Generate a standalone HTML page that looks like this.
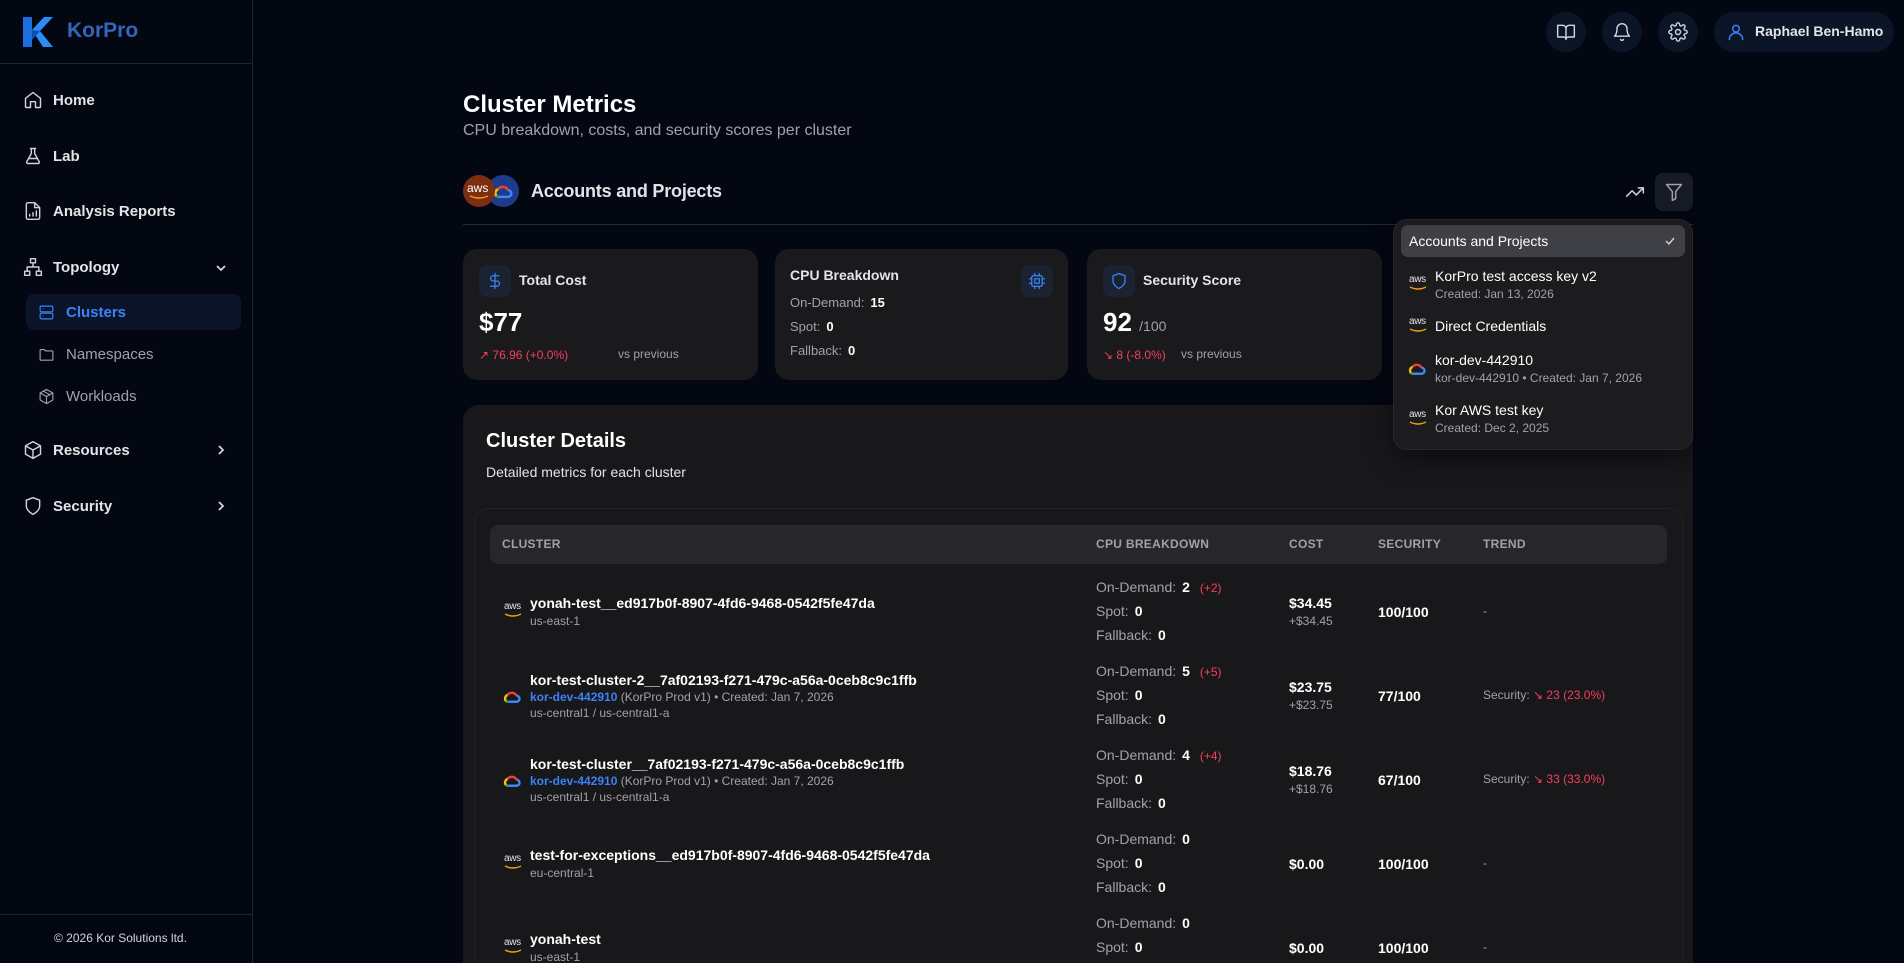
<!DOCTYPE html>
<html style="overflow:hidden;height:963px"><head><meta charset="utf-8">
<style>
*{box-sizing:border-box;margin:0;padding:0}
html,body{width:1904px;height:963px;overflow:hidden}
body{background:#030712;font-family:"Liberation Sans",sans-serif;color:#fff;position:relative}
.a{position:absolute;white-space:nowrap}
.side{position:absolute;left:0;top:0;width:253px;height:963px;border-right:1px solid #1f2433;background:#030712}
.nav{position:absolute;left:23px;font-size:15px;font-weight:600;color:#e4e4e7;display:flex;align-items:center;height:24px}
.nav svg{width:20px;height:20px;margin-right:10px;stroke:#d4d4d8;fill:none;stroke-width:1.7;stroke-linecap:round;stroke-linejoin:round}
.sub{position:absolute;left:38px;font-size:15px;color:#a1a1aa;display:flex;align-items:center;height:24px}
.sub svg{width:17px;height:17px;margin-right:11px;stroke:#a1a1aa;fill:none;stroke-width:1.6;stroke-linecap:round;stroke-linejoin:round}
.chev{position:absolute;left:214px;width:14px;height:14px;stroke:#d4d4d8;fill:none;stroke-width:1.8}
.card{position:absolute;top:249px;height:131px;background:#1a1a1d;border-radius:14px}
.ibox{position:absolute;width:32px;height:32px;border-radius:8px;background:#1b2333;display:flex;align-items:center;justify-content:center}
.ibox svg{width:18px;height:18px;stroke:#3b82f6;fill:none;stroke-width:1.7;stroke-linecap:round;stroke-linejoin:round}
.muted{color:#a1a1aa}
.red{color:#f43f5e}
.th{position:absolute;top:537px;font-size:12px;font-weight:700;color:#a1a1aa;letter-spacing:.3px}
.nm{font-size:14px;font-weight:600;color:#fff}
.sm{font-size:12px;color:#a1a1aa}
.cpu{font-size:14px;color:#a1a1aa}
.cpu b{color:#fff;font-weight:600;margin-left:6px}
.hbtn{position:absolute;top:12px;width:40px;height:40px;border-radius:20px;background:#0c1527;display:flex;align-items:center;justify-content:center}
.hbtn svg{width:20px;height:20px;stroke:#d4d4d8;fill:none;stroke-width:1.7;stroke-linecap:round;stroke-linejoin:round}
.aws{position:absolute;width:22px;height:16px}
.aws span{position:absolute;left:1px;top:-2px;font-size:10px;color:#e4e4e7;letter-spacing:-.3px}
.di{position:absolute;font-size:14px;color:#fff}
</style></head><body>

<div class="side">
  <svg class="a" style="left:22px;top:16px" width="32" height="32" viewBox="0 0 32 32"><path d="M1 1h9v30H1z" fill="#1d6fe0"/><path d="M10 14L22 1h9L18 15l13 16h-10z" fill="#2b8cf5"/><path d="M10 14l8 1-8 9z" fill="#0b4fb8"/></svg>
  <div class="a" style="left:67px;top:19px;font-size:21px;font-weight:700;color:#3366b8">KorPro</div>
  <div class="a" style="left:0;top:63px;width:253px;height:1px;background:#1f2433"></div>

  <div class="nav" style="top:88px"><svg viewBox="0 0 24 24"><path d="M3 10l9-7 9 7v10a1 1 0 0 1-1 1h-5v-7H9v7H4a1 1 0 0 1-1-1z"/></svg>Home</div>
  <div class="nav" style="top:144px"><svg viewBox="0 0 24 24"><path d="M9 3h6M10 3v6L4.5 19a1.5 1.5 0 0 0 1.3 2h12.4a1.5 1.5 0 0 0 1.3-2L14 9V3M7 15h10"/></svg>Lab</div>
  <div class="nav" style="top:199px"><svg viewBox="0 0 24 24"><path d="M14 2H6a2 2 0 0 0-2 2v16a2 2 0 0 0 2 2h12a2 2 0 0 0 2-2V8zM14 2v6h6M8 18v-2M12 18v-4M16 18v-6"/></svg>Analysis Reports</div>
  <div class="nav" style="top:255px"><svg viewBox="0 0 24 24"><rect x="9" y="2" width="6" height="5"/><rect x="2" y="17" width="6" height="5"/><rect x="16" y="17" width="6" height="5"/><path d="M12 7v5M5 17v-5h14v5"/></svg>Topology</div>
  <svg class="chev" style="top:261px" viewBox="0 0 14 14"><path d="M3 5l4 4 4-4"/></svg>

  <div class="a" style="left:26px;top:294px;width:215px;height:36px;border-radius:8px;background:#0b1429"></div>
  <div class="sub" style="top:300px;color:#3b82f6"><svg viewBox="0 0 24 24" style="stroke:#3b82f6"><rect x="3" y="3" width="18" height="8" rx="2"/><rect x="3" y="13" width="18" height="8" rx="2"/><path d="M7 7h.01M7 17h.01"/></svg><span style="font-weight:600">Clusters</span></div>
  <div class="sub" style="top:342px"><svg viewBox="0 0 24 24"><path d="M3 6a1 1 0 0 1 1-1h5l2 2h9a1 1 0 0 1 1 1v11a1 1 0 0 1-1 1H4a1 1 0 0 1-1-1z"/></svg>Namespaces</div>
  <div class="sub" style="top:384px"><svg viewBox="0 0 24 24"><path d="M12 2l9 5v10l-9 5-9-5V7zM3 7l9 5 9-5M12 12v10M7.5 4.5l9 5"/></svg>Workloads</div>

  <div class="nav" style="top:438px"><svg viewBox="0 0 24 24"><path d="M12 2l9 5v10l-9 5-9-5V7zM3 7l9 5 9-5M12 12v10"/></svg>Resources</div>
  <svg class="chev" style="top:443px" viewBox="0 0 14 14"><path d="M5 3l4 4-4 4"/></svg>
  <div class="nav" style="top:494px"><svg viewBox="0 0 24 24"><path d="M12 22s8-4 8-10V5l-8-3-8 3v7c0 6 8 10 8 10z"/></svg>Security</div>
  <svg class="chev" style="top:499px" viewBox="0 0 14 14"><path d="M5 3l4 4-4 4"/></svg>

  <div class="a" style="left:0;top:914px;width:253px;height:1px;background:#1f2433"></div>
  <div class="a" style="left:54px;top:931px;font-size:12px;color:#d4d4d8">© 2026 Kor Solutions ltd.</div>
</div>

<div class="hbtn" style="left:1546px"><svg viewBox="0 0 24 24"><path d="M2 4h6a4 4 0 0 1 4 4v13a3 3 0 0 0-3-3H2zM22 4h-6a4 4 0 0 0-4 4v13a3 3 0 0 1 3-3h7z"/></svg></div>
<div class="hbtn" style="left:1602px"><svg viewBox="0 0 24 24"><path d="M6 8a6 6 0 0 1 12 0c0 7 3 9 3 9H3s3-2 3-9M10.3 21a1.9 1.9 0 0 0 3.4 0"/></svg></div>
<div class="hbtn" style="left:1658px"><svg viewBox="0 0 24 24"><circle cx="12" cy="12" r="3"/><path d="M19.4 15a1.7 1.7 0 0 0 .3 1.8l.1.1a2 2 0 1 1-2.8 2.8l-.1-.1a1.7 1.7 0 0 0-1.8-.3 1.7 1.7 0 0 0-1 1.5V21a2 2 0 1 1-4 0v-.1a1.7 1.7 0 0 0-1.1-1.5 1.7 1.7 0 0 0-1.8.3l-.1.1a2 2 0 1 1-2.8-2.8l.1-.1a1.7 1.7 0 0 0 .3-1.8 1.7 1.7 0 0 0-1.5-1H3a2 2 0 1 1 0-4h.1a1.7 1.7 0 0 0 1.5-1.1 1.7 1.7 0 0 0-.3-1.8l-.1-.1a2 2 0 1 1 2.8-2.8l.1.1a1.7 1.7 0 0 0 1.800.3H9a1.7 1.7 0 0 0 1-1.5V3a2 2 0 1 1 4 0v.1a1.7 1.7 0 0 0 1 1.5 1.7 1.7 0 0 0 1.8-.3l.1-.1a2 2 0 1 1 2.8 2.8l-.1.1a1.7 1.7 0 0 0-.3 1.8V9a1.7 1.7 0 0 0 1.5 1H21a2 2 0 1 1 0 4h-.1a1.7 1.7 0 0 0-1.5 1z"/></svg></div>
<div class="a" style="left:1714px;top:12px;width:180px;height:40px;border-radius:20px;background:#0c1527"></div>
<svg class="a" style="left:1726px;top:22px" width="20" height="20" viewBox="0 0 24 24" fill="none" stroke="#3b82f6" stroke-width="1.8" stroke-linecap="round"><circle cx="12" cy="8" r="4"/><path d="M4 21a8 8 0 0 1 16 0"/></svg>
<div class="a" style="left:1755px;top:23px;font-size:14px;font-weight:700;color:#e4e4e7">Raphael Ben-Hamo</div>

<div class="a" style="left:463px;top:91px;font-size:24px;font-weight:700">Cluster Metrics</div>
<div class="a" style="left:463px;top:122px;font-size:16px;color:#a1a1aa">CPU breakdown, costs, and security scores per cluster</div>

<div class="a" style="left:463px;top:175px;width:32px;height:32px;border-radius:16px;background:#7c2d12;z-index:2"><span style="position:absolute;left:4px;top:6px;font-size:12px;color:#fff">aws</span><svg style="position:absolute;left:6px;top:20px" width="20" height="5" viewBox="0 0 20 5"><path d="M1 1q9 4 18 0" stroke="#f59e0b" stroke-width="1.5" fill="none"/></svg></div>
<div class="a" style="left:487px;top:175px;width:32px;height:32px;border-radius:16px;background:#1e3a8a"><svg style="position:absolute;left:6px;top:7px" width="20" height="18" viewBox="0 0 24 20" fill="none" stroke-width="3"><path d="M7 17h11a4 4 0 0 0 0-8" stroke="#4285f4"/><path d="M18 9a7 7 0 0 0-12-1" stroke="#ea4335"/><path d="M6 8a5 5 0 0 0-2 8" stroke="#fbbc05"/><path d="M4 16q1 1 3 1" stroke="#34a853"/></svg></div>
<div class="a" style="left:531px;top:181px;font-size:18px;font-weight:600;color:#e4e4e7;letter-spacing:-.2px">Accounts and Projects</div>

<svg class="a" style="left:1625px;top:182px" width="20" height="20" viewBox="0 0 24 24" fill="none" stroke="#d4d4d8" stroke-width="1.8" stroke-linecap="round" stroke-linejoin="round"><path d="M22 7l-8.5 8.5-5-5L2 17M16 7h6v6"/></svg>
<div class="a" style="left:1655px;top:173px;width:38px;height:38px;border-radius:8px;background:#161b26"></div>
<svg class="a" style="left:1664px;top:182px" width="20" height="20" viewBox="0 0 24 24" fill="none" stroke="#a1a1aa" stroke-width="1.8" stroke-linejoin="round"><path d="M3 3h18l-7 8.5V20l-4 2v-10.5z"/></svg>
<div class="a" style="left:463px;top:224px;width:1230px;height:1px;background:#262a35"></div>

<div class="card" style="left:463px;width:295px"></div>
<div class="ibox" style="left:479px;top:265px"><svg viewBox="0 0 24 24"><path d="M12 2v20M17 5H9.5a3.5 3.5 0 0 0 0 7h5a3.5 3.5 0 0 1 0 7H6"/></svg></div>
<div class="a" style="left:519px;top:272px;font-size:14px;font-weight:600;color:#e4e4e7">Total Cost</div>
<div class="a" style="left:479px;top:307px;font-size:26px;font-weight:700">$77</div>
<div class="a red" style="left:479px;top:348px;font-size:12px">↗ 76.96 (+0.0%)</div>
<div class="a muted" style="left:618px;top:347px;font-size:12px">vs previous</div>

<div class="card" style="left:775px;width:293px"></div>
<div class="a" style="left:790px;top:267px;font-size:14px;font-weight:600;color:#e4e4e7">CPU Breakdown</div>
<div class="ibox" style="left:1021px;top:265px"><svg viewBox="0 0 24 24"><rect x="5" y="5" width="14" height="14" rx="2"/><rect x="9" y="9" width="6" height="6"/><path d="M9 2v3M15 2v3M9 19v3M15 19v3M2 9h3M2 15h3M19 9h3M19 15h3"/></svg></div>
<div class="a cpu" style="left:790px;top:295px;font-size:13px">On-Demand:<b>15</b></div>
<div class="a cpu" style="left:790px;top:319px;font-size:13px">Spot:<b>0</b></div>
<div class="a cpu" style="left:790px;top:343px;font-size:13px">Fallback:<b>0</b></div>

<div class="card" style="left:1087px;width:295px"></div>
<div class="ibox" style="left:1103px;top:265px"><svg viewBox="0 0 24 24"><path d="M12 22s8-4 8-10V5l-8-3-8 3v7c0 6 8 10 8 10z"/></svg></div>
<div class="a" style="left:1143px;top:272px;font-size:14px;font-weight:600;color:#e4e4e7">Security Score</div>
<div class="a" style="left:1103px;top:307px;font-size:26px;font-weight:700">92 <span style="font-size:14px;font-weight:400;color:#a1a1aa">/100</span></div>
<div class="a red" style="left:1103px;top:348px;font-size:12px">↘ 8 (-8.0%)</div>
<div class="a muted" style="left:1181px;top:347px;font-size:12px">vs previous</div>

<div class="card" style="left:1399px;width:294px"></div>

<div class="a" style="left:463px;top:405px;width:1230px;height:580px;border-radius:16px;background:#18181b"></div>
<div class="a" style="left:486px;top:430px;font-size:20px;font-weight:700">Cluster Details</div>
<div class="a" style="left:486px;top:464px;font-size:14px;color:#e4e4e7">Detailed metrics for each cluster</div>
<div class="a" style="left:474px;top:508px;width:1209px;height:470px;border-radius:14px;border:1px solid #222226;background:#18181b"></div>
<div class="a" style="left:490px;top:525px;width:1177px;height:39px;border-radius:8px;background:#27272a"></div>
<div class="th" style="left:502px">CLUSTER</div>
<div class="th" style="left:1096px">CPU BREAKDOWN</div>
<div class="th" style="left:1289px">COST</div>
<div class="th" style="left:1378px">SECURITY</div>
<div class="th" style="left:1483px">TREND</div>

<div class="aws" style="left:503px;top:603px"><span>aws</span><svg style="position:absolute;left:1px;top:10px" width="18" height="5" viewBox="0 0 18 5"><path d="M1 1q8 4 16 0" stroke="#f59e0b" stroke-width="1.4" fill="none"/></svg></div>
<div class="a nm" style="left:530px;top:595px">yonah-test__ed917b0f-8907-4fd6-9468-0542f5fe47da</div>
<div class="a sm" style="left:530px;top:614px">us-east-1</div>
<div class="a cpu" style="left:1096px;top:579px">On-Demand:<b>2</b> <span class="red" style="font-size:12px;margin-left:6px">(+2)</span></div>
<div class="a cpu" style="left:1096px;top:603px">Spot:<b>0</b></div>
<div class="a cpu" style="left:1096px;top:627px">Fallback:<b>0</b></div>
<div class="a nm" style="left:1289px;top:595px">$34.45</div>
<div class="a sm" style="left:1289px;top:614px">+$34.45</div>
<div class="a nm" style="left:1378px;top:604px">100/100</div>
<div class="a sm" style="left:1483px;top:604px">-</div>

<svg class="a" style="left:503px;top:689px" width="18" height="15" viewBox="0 0 24 20" fill="none" stroke-width="3.2"><path d="M7 17h11a4 4 0 0 0 0-8" stroke="#4285f4"/><path d="M18 9a7 7 0 0 0-12-1" stroke="#ea4335"/><path d="M6 8a5 5 0 0 0-2 8" stroke="#fbbc05"/><path d="M4 16q1 1 3 1" stroke="#34a853"/></svg>
<div class="a nm" style="left:530px;top:672px">kor-test-cluster-2__7af02193-f271-479c-a56a-0ceb8c9c1ffb</div>
<div class="a sm" style="left:530px;top:690px"><span style="color:#3b82f6;font-weight:600">kor-dev-442910</span> (KorPro Prod v1) • Created: Jan 7, 2026</div>
<div class="a sm" style="left:530px;top:706px">us-central1 / us-central1-a</div>
<div class="a cpu" style="left:1096px;top:663px">On-Demand:<b>5</b> <span class="red" style="font-size:12px;margin-left:6px">(+5)</span></div>
<div class="a cpu" style="left:1096px;top:687px">Spot:<b>0</b></div>
<div class="a cpu" style="left:1096px;top:711px">Fallback:<b>0</b></div>
<div class="a nm" style="left:1289px;top:679px">$23.75</div>
<div class="a sm" style="left:1289px;top:698px">+$23.75</div>
<div class="a nm" style="left:1378px;top:688px">77/100</div>
<div class="a sm" style="left:1483px;top:688px">Security: <span class="red">↘ 23 (23.0%)</span></div>

<svg class="a" style="left:503px;top:773px" width="18" height="15" viewBox="0 0 24 20" fill="none" stroke-width="3.2"><path d="M7 17h11a4 4 0 0 0 0-8" stroke="#4285f4"/><path d="M18 9a7 7 0 0 0-12-1" stroke="#ea4335"/><path d="M6 8a5 5 0 0 0-2 8" stroke="#fbbc05"/><path d="M4 16q1 1 3 1" stroke="#34a853"/></svg>
<div class="a nm" style="left:530px;top:756px">kor-test-cluster__7af02193-f271-479c-a56a-0ceb8c9c1ffb</div>
<div class="a sm" style="left:530px;top:774px"><span style="color:#3b82f6;font-weight:600">kor-dev-442910</span> (KorPro Prod v1) • Created: Jan 7, 2026</div>
<div class="a sm" style="left:530px;top:790px">us-central1 / us-central1-a</div>
<div class="a cpu" style="left:1096px;top:747px">On-Demand:<b>4</b> <span class="red" style="font-size:12px;margin-left:6px">(+4)</span></div>
<div class="a cpu" style="left:1096px;top:771px">Spot:<b>0</b></div>
<div class="a cpu" style="left:1096px;top:795px">Fallback:<b>0</b></div>
<div class="a nm" style="left:1289px;top:763px">$18.76</div>
<div class="a sm" style="left:1289px;top:782px">+$18.76</div>
<div class="a nm" style="left:1378px;top:772px">67/100</div>
<div class="a sm" style="left:1483px;top:772px">Security: <span class="red">↘ 33 (33.0%)</span></div>

<div class="aws" style="left:503px;top:855px"><span>aws</span><svg style="position:absolute;left:1px;top:10px" width="18" height="5" viewBox="0 0 18 5"><path d="M1 1q8 4 16 0" stroke="#f59e0b" stroke-width="1.4" fill="none"/></svg></div>
<div class="a nm" style="left:530px;top:847px">test-for-exceptions__ed917b0f-8907-4fd6-9468-0542f5fe47da</div>
<div class="a sm" style="left:530px;top:866px">eu-central-1</div>
<div class="a cpu" style="left:1096px;top:831px">On-Demand:<b>0</b></div>
<div class="a cpu" style="left:1096px;top:855px">Spot:<b>0</b></div>
<div class="a cpu" style="left:1096px;top:879px">Fallback:<b>0</b></div>
<div class="a nm" style="left:1289px;top:856px">$0.00</div>
<div class="a nm" style="left:1378px;top:856px">100/100</div>
<div class="a sm" style="left:1483px;top:856px">-</div>

<div class="aws" style="left:503px;top:939px"><span>aws</span><svg style="position:absolute;left:1px;top:10px" width="18" height="5" viewBox="0 0 18 5"><path d="M1 1q8 4 16 0" stroke="#f59e0b" stroke-width="1.4" fill="none"/></svg></div>
<div class="a nm" style="left:530px;top:931px">yonah-test</div>
<div class="a sm" style="left:530px;top:950px">us-east-1</div>
<div class="a cpu" style="left:1096px;top:915px">On-Demand:<b>0</b></div>
<div class="a cpu" style="left:1096px;top:939px">Spot:<b>0</b></div>
<div class="a nm" style="left:1289px;top:940px">$0.00</div>
<div class="a nm" style="left:1378px;top:940px">100/100</div>
<div class="a sm" style="left:1483px;top:940px">-</div>

<div class="a" style="left:1393px;top:219px;width:300px;height:231px;border-radius:14px;background:#1c1c1f;border:1px solid #26262b;box-shadow:0 8px 24px rgba(0,0,0,.5)"></div>
<div class="a" style="left:1401px;top:225px;width:284px;height:32px;border-radius:7px;background:#3f3f46"></div>
<div class="a" style="left:1409px;top:233px;font-size:14px;font-weight:500;color:#fff">Accounts and Projects</div>
<svg class="a" style="left:1664px;top:235px" width="12" height="12" viewBox="0 0 12 12" fill="none" stroke="#d4d4d8" stroke-width="1.4"><path d="M2 6l3 3 5-6"/></svg>

<div class="aws" style="left:1408px;top:276px"><span>aws</span><svg style="position:absolute;left:1px;top:10px" width="18" height="5" viewBox="0 0 18 5"><path d="M1 1q8 4 16 0" stroke="#f59e0b" stroke-width="1.4" fill="none"/></svg></div>
<div class="di" style="left:1435px;top:268px">KorPro test access key v2</div>
<div class="a sm" style="left:1435px;top:287px">Created: Jan 13, 2026</div>
<div class="aws" style="left:1408px;top:318px"><span>aws</span><svg style="position:absolute;left:1px;top:10px" width="18" height="5" viewBox="0 0 18 5"><path d="M1 1q8 4 16 0" stroke="#f59e0b" stroke-width="1.4" fill="none"/></svg></div>
<div class="di" style="left:1435px;top:318px">Direct Credentials</div>
<svg class="a" style="left:1408px;top:361px" width="18" height="15" viewBox="0 0 24 20" fill="none" stroke-width="3.2"><path d="M7 17h11a4 4 0 0 0 0-8" stroke="#4285f4"/><path d="M18 9a7 7 0 0 0-12-1" stroke="#ea4335"/><path d="M6 8a5 5 0 0 0-2 8" stroke="#fbbc05"/><path d="M4 16q1 1 3 1" stroke="#34a853"/></svg>
<div class="di" style="left:1435px;top:352px">kor-dev-442910</div>
<div class="a sm" style="left:1435px;top:371px">kor-dev-442910 • Created: Jan 7, 2026</div>
<div class="aws" style="left:1408px;top:411px"><span>aws</span><svg style="position:absolute;left:1px;top:10px" width="18" height="5" viewBox="0 0 18 5"><path d="M1 1q8 4 16 0" stroke="#f59e0b" stroke-width="1.4" fill="none"/></svg></div>
<div class="di" style="left:1435px;top:402px">Kor AWS test key</div>
<div class="a sm" style="left:1435px;top:421px">Created: Dec 2, 2025</div>

</body></html>
